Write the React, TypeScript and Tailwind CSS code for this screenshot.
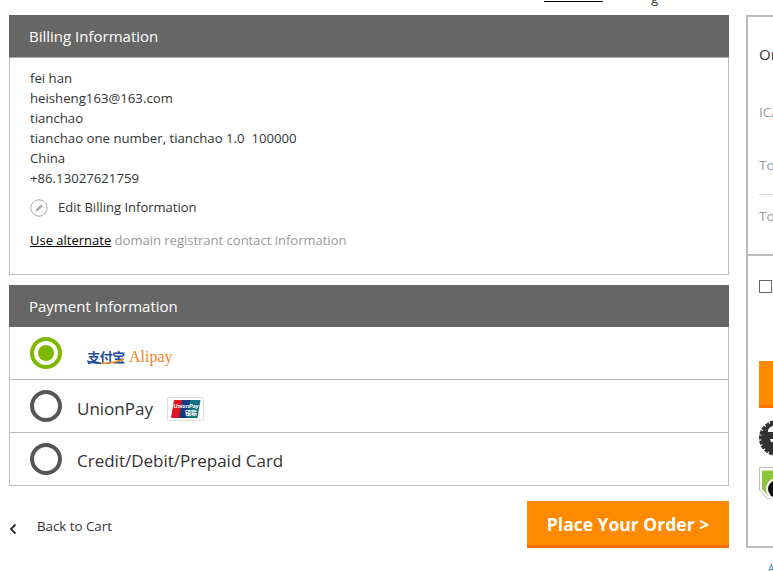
const font = "font-['Open_Sans','Noto_Sans',sans-serif]";

function Radio({ active }: { active?: boolean }) {
  if (active) {
    return (
      <span className="w-[32px] h-[32px] rounded-full border-[4px] border-[#7fb800] flex items-center justify-center shrink-0">
        <span className="w-[16px] h-[16px] rounded-full bg-[#7fb800]" />
      </span>
    );
  }
  return <span className="w-[32px] h-[32px] rounded-full border-[4px] border-[#555555] shrink-0" />;
}

function PanelHeader({ title }: { title: string }) {
  return (
    <div className="h-[42px] bg-[#666666] pl-[20px] pt-[1px] flex items-center text-[15px] text-white">{title}</div>
  );
}

function UnionPayLogo() {
  return (
    <span className="w-[37px] h-[24px] border border-[#dddddd] rounded-[2px] flex items-center justify-center bg-white">
      <svg width="31" height="20" viewBox="0 0 31 20">
        <path d="M4 1h10l-3 18H1z" fill="#e0141e" />
        <path d="M12 1h10l-3 18H9z" fill="#17397f" />
        <path d="M20 1h10.500l-3 18H17z" fill="#0f7480" />
        <text x="3.500" y="9" fontSize="5.500" fontStyle="italic" fontWeight="700" fill="#ffffff" fontFamily="Liberation Sans, sans-serif">UnionPay</text>
        <text x="15" y="16" fontSize="6" fontWeight="700" fill="#ffffff" fontFamily="Noto Sans CJK SC, sans-serif">银联</text>
      </svg>
    </span>
  );
}

function AlipayLogo() {
  return (
    <span className="flex items-center ml-[25px] mt-[7px]">
      <span className="relative w-[38px] h-[20px] flex items-center justify-center">
        <span className="font-['Noto_Sans_CJK_SC',sans-serif] font-bold text-[13px] leading-none tracking-[-0.5px] text-[#1c4f9c]">支付宝</span>
        <svg className="absolute left-0 top-[9px]" width="38" height="9" viewBox="0 0 38 9">
          <path d="M14 7.200c8 .4 16-1.200 23-4.200" fill="none" stroke="#f08a24" strokeWidth="1.500" />
          <path d="M0 5c4 1.800 9 2.300 14 2.200" fill="none" stroke="#1c4f9c" strokeWidth="1.500" />
        </svg>
      </span>
      <span className="ml-[4px] font-['Liberation_Serif',serif] text-[16px] leading-none text-[#f58220]">Alipay</span>
    </span>
  );
}

function Billing() {
  const lines = [
    "fei han",
    "heisheng163@163.com",
    "tianchao",
    "tianchao one number, tianchao 1.0\u00a0\u00a0100000",
    "China",
    "+86.13027621759",
  ];
  return (
    <section className="border border-[#bbbbbb] border-t-0">
      <div className="-mx-px border-b border-[#aaaaaa]">
        <PanelHeader title="Billing Information" />
      </div>
      <div className="h-[216px] pl-[20px] pt-[10px] text-[13.2px] text-[#333333]">
        {lines.map((l) => (
          <div key={l} className="h-[20px] leading-[20px]">{l}</div>
        ))}
        <div className="flex items-center mt-[11px] h-[18px] text-[13px]">
          <svg width="18" height="18" viewBox="0 0 18 18" fill="none">
            <circle cx="9" cy="9" r="8.200" stroke="#aaaaaa" strokeWidth="1" />
            <path d="M5.500 12.500l1-2.800 4.300-4.300 1.800 1.800-4.300 4.300z" fill="#aaaaaa" />
          </svg>
          <span className="ml-[10px]">Edit Billing Information</span>
        </div>
        <div className="mt-[13px] leading-[20px] text-[13px]">
          <span className="text-black underline">Use alternate</span>
          <span className="text-[#999999]"> domain registrant contact information</span>
        </div>
      </div>
    </section>
  );
}

function Payment() {
  return (
    <section className="mt-[10px] border border-[#bbbbbb] border-t-0">
      <div className="-mx-px">
        <PanelHeader title="Payment Information" />
      </div>
      <div className="h-[53px] pl-[20px] flex items-center border-b border-[#bbbbbb]">
        <Radio active />
        <AlipayLogo />
      </div>
      <div className="h-[53px] pl-[20px] flex items-center border-b border-[#bbbbbb] text-[17px] text-[#333333]">
        <Radio />
        <span className="ml-[15px] mt-[6px]">UnionPay</span>
        <span className="ml-[14px] mt-[6px]"><UnionPayLogo /></span>
      </div>
      <div className="h-[52px] pl-[20px] flex items-center text-[17px] text-[#333333]">
        <Radio />
        <span className="ml-[15px] mt-[4px]">Credit/Debit/Prepaid Card</span>
      </div>
    </section>
  );
}

function Sidebar() {
  return (
    <aside className="w-[220px] shrink-0 ml-[17px] h-[533px] border-2 border-[#bbbbbb] text-[13.5px]">
      <div className="h-[239px] pl-[11px] pt-[27px] whitespace-nowrap border-b-2 border-[#bbbbbb]">
        <div className="text-[#333333] text-[15px] leading-[20px]">Order Summary</div>
        <div className="mt-[38px] text-[#999999] leading-[20px]">ICANN fee</div>
        <div className="mt-[33px] text-[#999999] leading-[20px]">Total</div>
        <div className="mt-[19px] border-t border-[#dddddd]" />
        <div className="mt-[11px] text-[#999999] leading-[20px]">Total</div>
      </div>
      <div className="pl-[11px] pt-[24px]">
        <span className="block w-[13px] h-[13px] border border-[#666666]" />
        <div className="mt-[68px] w-[190px] h-[47px] bg-[#ff8a00] border-b-[3px] border-[#ff6f00]" />
        <svg className="mt-[11px]" width="40" height="38" viewBox="0 0 40 38">
          <circle cx="18" cy="19" r="16.500" fill="none" stroke="#333333" strokeWidth="3" strokeDasharray="4 1" />
          <circle cx="18" cy="19" r="16" fill="#333333" />
          <path d="M9 11c2-4 6-5 10-5v7H9z" fill="#ffffff" />
          <path d="M11 20h10v3H12z" fill="#ffffff" />
        </svg>
        <svg className="mt-[10px]" width="30" height="34" viewBox="0 0 30 34">
          <path d="M.5.500h29v21L9 32 .5 23z" fill="#ffffff" stroke="#bbbbbb" />
          <path d="M3 3.500h27v17L9 29 3 22z" fill="#8cc63f" />
          <circle cx="18" cy="22" r="11" fill="#ffffff" />
          <circle cx="18" cy="22" r="9" fill="#111111" />
        </svg>
      </div>
    </aside>
  );
}

export default function App() {
  return (
    <div className={`w-[773px] h-[571px] overflow-hidden bg-white ${font}`}>
      <div className="h-[15px] overflow-hidden flex">
        <div className="ml-[544px] mt-[1px] w-[59px] h-[1px] bg-black" />
        <span className="ml-[48px] -mt-[12px] text-[13.2px] leading-[20px] text-[#333333]">g</span>
      </div>
      <div className="flex pl-[9px]">
        <main className="w-[720px] shrink-0">
          <Billing />
          <Payment />
          <div className="mt-[15px] flex justify-between items-start">
            <div className="flex items-center h-[47px] pt-[4px] text-[13.300px] text-[#333333]">
              <svg className="mt-[5px]" width="8" height="12" viewBox="0 0 8 12" fill="none">
                <path d="M6.500 1.500L2 6l4.500 4.500" stroke="#333333" strokeWidth="2" />
              </svg>
              <span className="ml-[20px]">Back to Cart</span>
            </div>
            <button className="w-[202px] h-[47px] pt-[3px] bg-[#ff8a00] border-b-[3px] border-[#ff6f00] text-white text-[17.500px] font-bold">
              Place Your Order &gt;
            </button>
          </div>
        </main>
        <Sidebar />
      </div>
      <div className="pl-[768px] mt-[10px] text-[10px] leading-[20px] text-[#3b7fc4]">A</div>
    </div>
  );
}
